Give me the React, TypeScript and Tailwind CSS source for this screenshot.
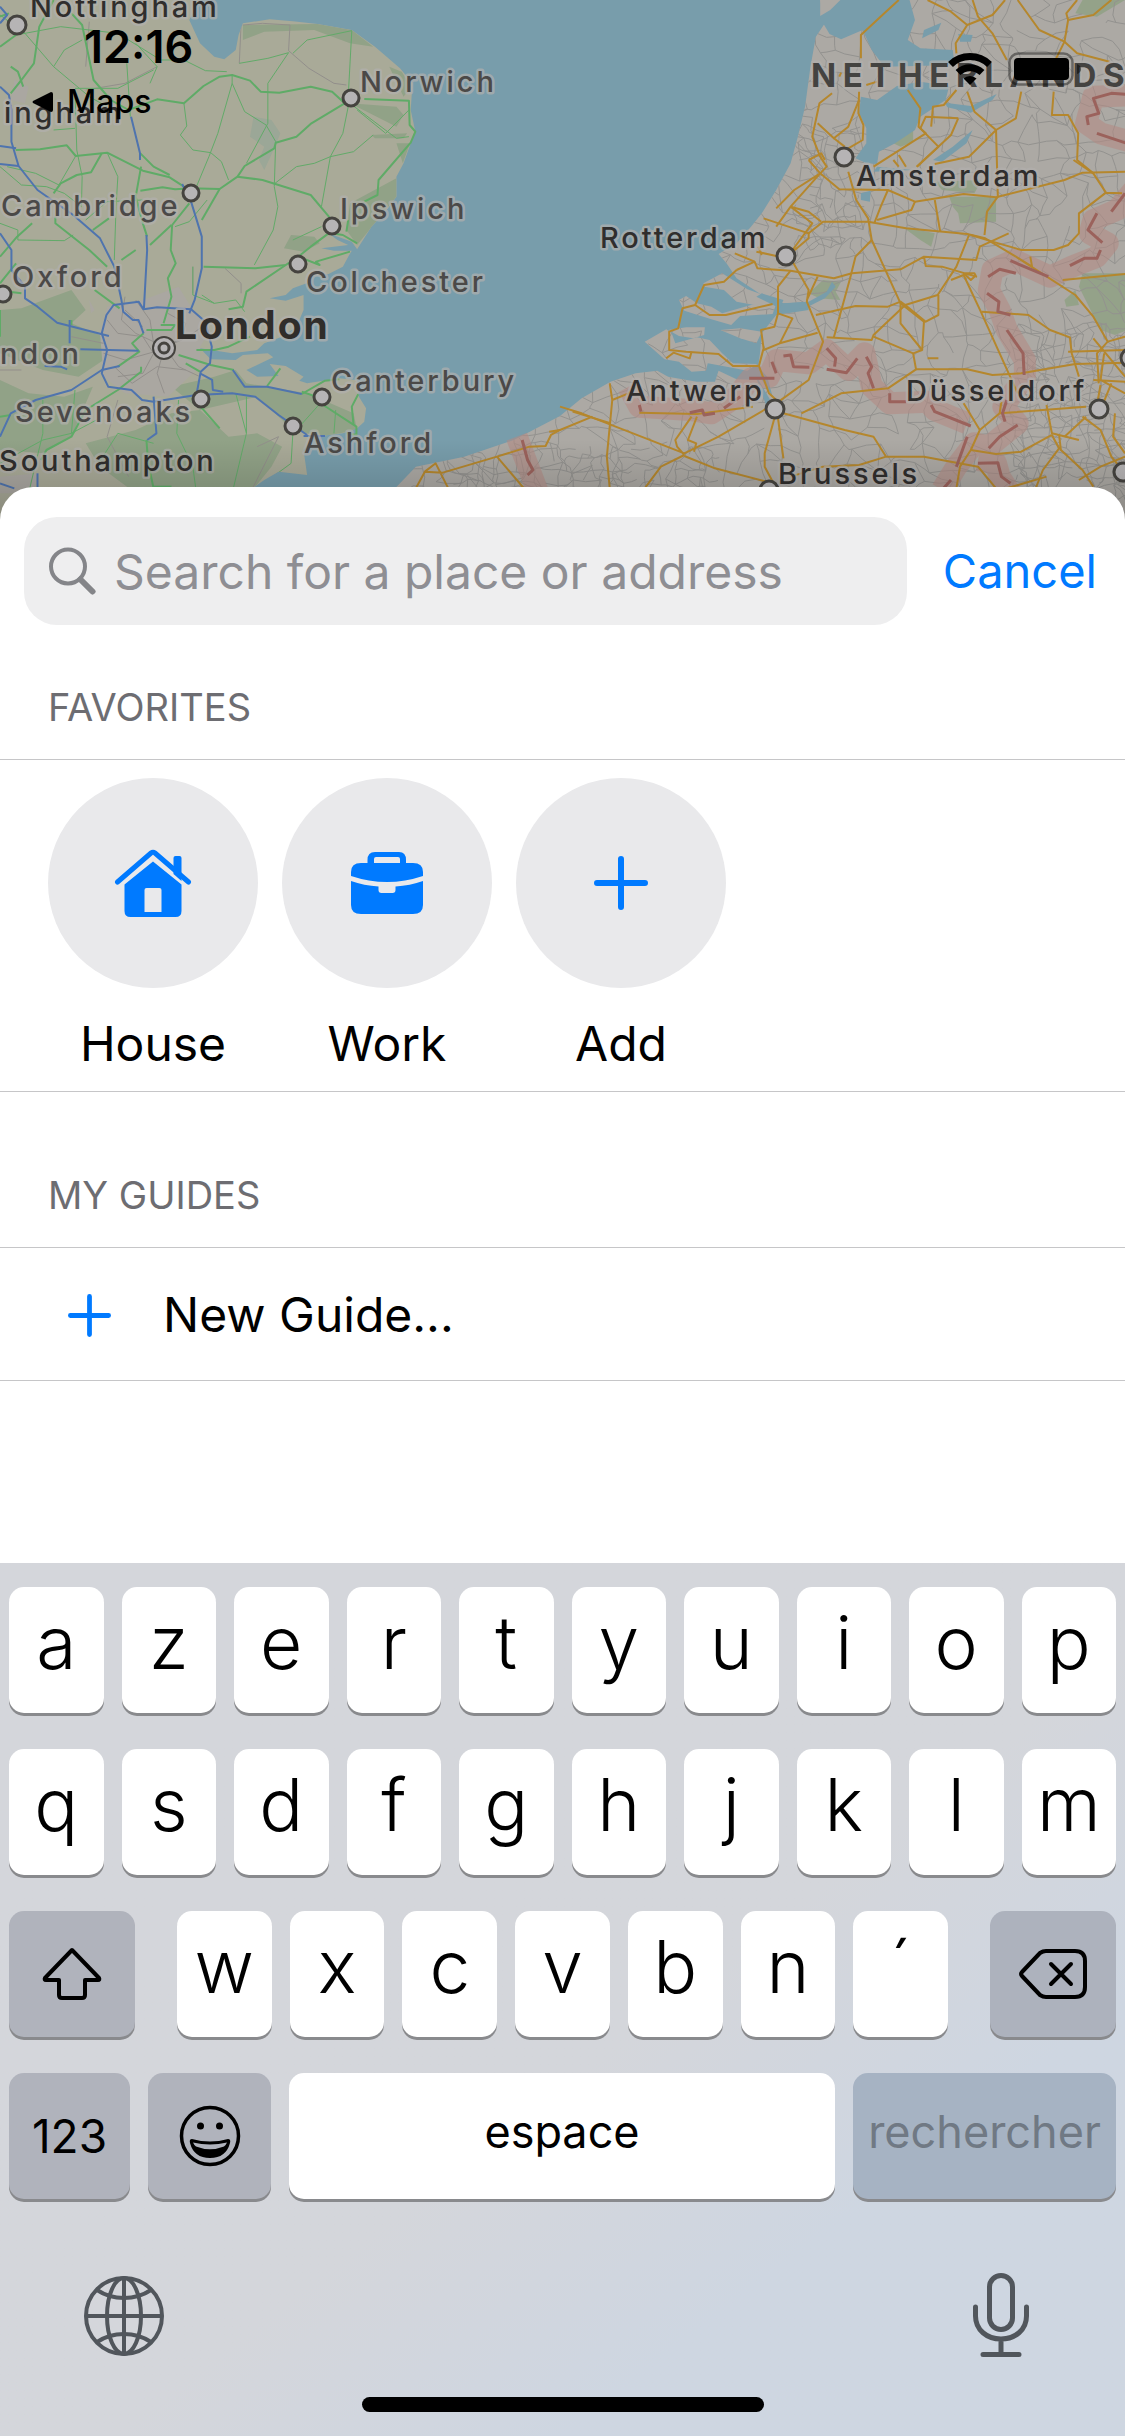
import type { ReactNode } from "react";

type Label = { t: string; x: number; y: number; kind: "town" | "city" | "capital" | "country" };
type Dot = { x: number; y: number; r: number };

const labels: Label[] = [
  { t: "Nottingham", x: 30, y: 17, kind: "city" },
  { t: "ingham", x: 4, y: 123, kind: "city" },
  { t: "Norwich", x: 360, y: 92, kind: "town" },
  { t: "Cambridge", x: 1, y: 216, kind: "town" },
  { t: "Ipswich", x: 340, y: 219, kind: "town" },
  { t: "Colchester", x: 306, y: 292, kind: "town" },
  { t: "Oxford", x: 12, y: 287, kind: "town" },
  { t: "London", x: 175, y: 339, kind: "capital" },
  { t: "ndon", x: 0, y: 364, kind: "town" },
  { t: "Canterbury", x: 331, y: 391, kind: "town" },
  { t: "Sevenoaks", x: 15, y: 422, kind: "town" },
  { t: "Ashford", x: 304, y: 453, kind: "town" },
  { t: "Southampton", x: -1, y: 471, kind: "city" },
  { t: "NETHERLANDS", x: 811, y: 87, kind: "country" },
  { t: "Amsterdam", x: 856, y: 186, kind: "city" },
  { t: "Rotterdam", x: 600, y: 248, kind: "city" },
  { t: "Antwerp", x: 626, y: 401, kind: "city" },
  { t: "Düsseldorf", x: 906, y: 401, kind: "city" },
  { t: "Brussels", x: 778, y: 484, kind: "city" },
];

const labelStyle = {
  town: "text-[29px] font-medium tracking-widest fill-[#4b4948]",
  city: "text-[29px] font-medium tracking-widest fill-[#302e2d]",
  capital: "text-[39px] font-bold tracking-wider fill-[#302d2a]",
  country: "text-[33px] font-bold tracking-[0.2em] fill-[#444341]",
};

const dots: Dot[] = [
  { x: 17, y: 25, r: 9 }, { x: 351, y: 98, r: 8 }, { x: 191, y: 193, r: 8 },
  { x: 332, y: 226, r: 8 }, { x: 298, y: 264, r: 8 }, { x: 3, y: 294, r: 8 },
  { x: 201, y: 399, r: 8 }, { x: 322, y: 397, r: 8 }, { x: 293, y: 426, r: 8 },
  { x: 844, y: 157, r: 9 }, { x: 786, y: 256, r: 9 }, { x: 775, y: 409, r: 9 },
  { x: 1099, y: 409, r: 9 }, { x: 769, y: 490, r: 9 }, { x: 1130, y: 358, r: 9 },
  { x: 1123, y: 472, r: 9 },
];

/* Irregular web of minor roads, jittered from a regular grid. */
function hash(a: number, b: number, k: number) {
  const v = Math.sin(a * 127 + b * 311 + k * 74) * 43758;
  return v - Math.floor(v);
}

function roadWeb(x0: number, y0: number, x1: number, y1: number, step: number, keep: number) {
  const p = (i: number, j: number) => [
    x0 + i * step + (hash(i, j, 1) - 0.5) * step * 0.9,
    y0 + j * step + (hash(i, j, 2) - 0.5) * step * 0.9,
  ];
  const link = (a: number[], b: number[], i: number, j: number, k: number) => {
    const mx = (a[0] + b[0]) / 2 + (hash(i, j, k) - 0.5) * step * 0.35;
    const my = (a[1] + b[1]) / 2 + (hash(i, j, k + 1) - 0.5) * step * 0.35;
    return `M${a[0].toFixed(1)} ${a[1].toFixed(1)}L${mx.toFixed(1)} ${my.toFixed(1)}L${b[0].toFixed(1)} ${b[1].toFixed(1)}`;
  };
  let d = "";
  for (let i = 0; x0 + i * step < x1; i++) {
    for (let j = 0; y0 + j * step < y1; j++) {
      const a = p(i, j);
      if (hash(i, j, 3) < keep) d += link(a, p(i + 1, j), i, j, 5);
      if (hash(i, j, 4) < keep) d += link(a, p(i, j + 1), i, j, 8);
      if (hash(i, j, 9) < keep * 0.25) d += link(a, p(i + 1, j + 1), i, j, 11);
    }
  }
  return d;
}

/* British land masses and roads, on a 1568 x 1500 survey grid. */
const ukLand =
  "M0 0H560L530 60 560 130 600 170 628 178 660 150 668 105 680 70 755 58 820 64 890 72 985 90 1050 140 1120 205 1155 250 1150 330 1163 395 1150 430 1130 490 1110 530 1110 590 1075 640 1040 680 1000 748 985 725 950 712 920 700 945 720 975 735 900 745 935 752 985 752 975 770 960 800 920 822 860 830 870 845 820 865 800 885 755 895 800 902 850 885 850 930 830 980 790 1010 740 1030 720 1050 650 1060 560 1045 590 1078 660 1080 680 1065 750 1060 765 1072 730 1090 690 1110 720 1130 780 1128 755 1092 800 1098 850 1130 838 1142 860 1150 950 1135 1000 1140 1005 1190 1025 1225 1020 1265 1000 1285 960 1300 880 1310 850 1350 860 1425 780 1415 740 1440 700 1470 0 1600Z";

const ukGreen = [
  "M0 930L60 925 200 870 240 930 200 970 290 1010 290 1080 220 1130 120 1110 0 1060Z",
  "M240 1330L380 1290 480 1240 560 1230 640 1310 720 1300 790 1340 760 1400 700 1480 380 1480 280 1400Z",
  "M480 1160L600 1130 660 1110 690 1150 860 1180 990 1240 1000 1290 900 1310 820 1290 720 1190 560 1230Z",
  "M680 75L890 72 985 90 1045 140 980 130 880 90 740 95 680 120Z",
  "M1090 200L1125 215 1150 260 1130 290Z",
  "M980 310L1110 320 1130 345 1110 380Z",
  "M1040 405L1140 400 1130 415 1050 415Z",
  "M1110 430L1148 430 1128 490Z",
  "M1110 535L1110 590 1000 735 970 690 980 610Z",
  "M815 705L880 710 895 730 850 755 795 745Z",
  "M0 1140L80 1180 180 1190 260 1160 200 1310 120 1360 0 1350Z",
];

const ukUrban =
  "M300 920L400 900 500 860 540 930 590 990 560 1040 560 1100 470 1190 350 1180 290 1130 280 1000Z M40 240L80 260 70 310 30 300Z M0 1430L110 1420 90 1480 0 1480Z M250 900L265 930 255 940Z";

const ukMotorways = [
  "M0 20L20 45 0 70", "M0 260L25 285 32 330 32 425 52 498 105 570 205 645 280 715 320 800 340 900 345 935 372 960 388 960 402 1000",
  "M0 438L45 445", "M0 492L52 498", "M367 350L392 460 392 480",
  "M510 552L535 605 565 710 565 805 545 900 530 940", "M410 705L412 750 403 925",
  "M318 915L388 905 402 928 440 922 535 928 575 965 593 1040 588 1090 562 1115 550 1185 430 1205 398 1200 368 1170 303 1160 285 1120 300 1050 285 1000 298 945Z",
  "M0 700L32 750 32 810 70 860 70 895 105 920 160 968 305 1008", "M225 1048L388 1052", "M125 1098L170 1100 188 1108",
  "M0 1310L30 1240 100 1200 200 1170 285 1110 335 1098", "M430 1190L438 1300 412 1320",
  "M550 1185L650 1180 715 1190 780 1245 860 1305", "M560 1120L594 1140 596 1170 625 1175", "M652 1110L685 1160 748 1160 845 1182",
  "M850 1308L910 1308", "M0 1450L40 1465", "M105 1420L105 1465", "M195 960L195 1030",
];

const ukMajor = [
  "M150 0L110 80 95 190 60 240 30 280", "M200 40L230 75 262 240 310 300 360 330 440 298 515 310 570 258 615 230 650 225 700 242 730 275 782 278 870 260 930 275 965 310 872 370 830 410 772 428 768 445 685 498 665 530 615 567 530 565",
  "M1020 297L1145 302 1147 375 1163 395 1150 428 1060 540 1057 585 1020 605", "M665 530L735 540 870 585 925 655",
  "M44 450L112 448 187 436 212 468 300 458 400 512 475 532 515 560", "M150 580L170 550 215 525 255 517 285 460",
  "M393 460L430 500 475 525", "M395 500L380 590 400 670 412 710", "M393 572L455 562 490 568 540 565", "M615 567L565 660",
  "M920 700L870 740 835 770 800 795 715 805 570 800", "M800 795L690 875 680 920 640 928", "M530 610L482 675 478 750 492 790 470 835 480 890 458 970",
  "M930 700L960 705 1000 730", "M835 770L895 795 885 785 980 755", "M480 675L420 735", "M155 650L155 670 250 750 300 800",
  "M340 780L380 750", "M0 850L45 790", "M0 770L48 710 90 670", "M265 870L335 925", "M25 875L60 880",
  "M0 140L45 105", "M0 50L25 40", "M30 200L50 215 65 260", "M402 1000L370 1030 390 1055 330 1100", "M450 975L490 975 480 990 410 990",
  "M500 1065L590 1095 655 1110", "M520 1090L560 1115", "M550 1050L600 1050 640 1040 700 1010", "M395 1100L395 1115 330 1170 240 1230 200 1310 130 1350 115 1380",
  "M562 1220L615 1285", "M845 1182L910 1142 950 1138", "M748 1158L785 1105", "M905 1215L998 1280 998 1305 970 1300", "M1003 1183L985 1220 990 1275",
  "M410 1320L415 1390 430 1465", "M0 1250L30 1245", "M845 1175L880 1188", "M200 960L200 975", "M0 930L0 1010", "M975 660L970 695",
  "M430 1460H480", "M260 690L305 655",
];

const ukMinor = [
  "M0 45L70 100 150 200 250 290 300 320", "M45 105L170 80 330 100 420 160 450 180 515 180 575 212 635 215", "M355 190L365 350", "M380 130L440 200 420 250",
  "M150 200L180 150 230 120", "M650 225L650 250 685 335 745 375 772 425 768 560 778 620 765 690 712 795", "M670 190L750 175 808 158 750 250 750 370 690 490",
  "M820 160L860 120 985 92 975 290", "M975 320L960 400 925 470 900 620", "M1000 330L1080 400 1145 330", "M980 310L1110 415 1145 410",
  "M1045 405L990 455 925 470 880 490 830 500 770 550", "M515 310L523 378 505 405 540 450 590 458 620 485 640 540", "M650 250L610 400 585 470 550 560",
  "M210 270L215 450 230 530 228 620", "M212 468L165 555 100 520 20 500", "M300 458L330 530 325 620 320 780", "M0 500L60 555 130 560 180 580 228 620",
  "M0 670L50 690 50 720 180 722 205 705", "M400 600L300 605 240 660", "M565 885L600 910 660 900 685 935", "M540 800L540 885 600 910",
  "M490 680L530 665 580 600", "M150 390L210 385", "M210 265L330 265 430 210", "M80 1480L120 1300 120 1200", "M500 1200L495 1300 540 1400 550 1480",
  "M690 1190L690 1300 650 1480", "M820 1300L815 1390 700 1480", "M905 1200L830 1290", "M940 1230L935 1300", "M660 1180L690 1300", "M210 1170L200 1300",
  "M0 1390L120 1320 200 1300 270 1260", "M430 1330L330 1300 270 1400", "M820 720L900 680",
];

const ukGrey =
  "M680 75L735 70 812 75 808 152 865 205 935 250 970 255M675 75L670 190M540 800V880M630 805L675 850 675 880M350 890L340 960 380 1000 460 1040M300 960L330 1000 400 1010 430 1060 400 1120 330 1130M460 1040L500 1100 560 1130M460 1045L440 1120 460 1180M460 1040L540 1000 580 970M380 900L420 960 430 1030M350 930L400 980M290 1060L350 1080 450 1050M470 940L520 970 510 1020 460 1040M200 1010L290 1030M320 1100L370 1150 440 1100 520 1110M720 1340L780 1310 700 1480M240 270L350 250 440 200M250 65L240 200M0 1110L60 1110M330 1200L300 1310 360 1430";

/* Continental land masses and roads, same grid, shifted east. */
const euMain =
  "M-480 1490L-400 1400 -266 1370 -128 1320 0 1248 60 1195 140 1145 210 1120 270 1112 300 1130 380 1145 430 1145 440 1112 490 1138 560 1140 590 1190 575 1130 550 1100 555 1060 560 1000 600 945 690 930 690 905 620 910 560 885 490 835 462 790 440 762 490 730 530 680 560 640 600 570 640 490 660 410 680 320 695 200 710 110 735 70 722 0H1600V1600H-480Z";

const euIslands = [
  "M235 1025L295 988 310 1000 320 1030 380 1012 415 1020 450 1060 480 1090 548 1092 520 1112 470 1102 410 1090 405 1112 365 1115 330 1085 290 1078Z",
  "M300 990L350 982 402 982 400 1005 370 1015 330 1008Z",
  "M330 900L350 888 380 910 420 920 450 940 540 912 600 912 590 942 500 948 475 975 420 958 345 932Z",
  "M398 850L450 820 520 868 602 900 600 915 540 915 490 905 455 870 400 860Z",
  "M445 990L500 985 560 995 545 1030 500 1015Z",
];

const euWater = [
  "M722 55L745 0H970L985 60 965 120 1000 145 1090 150 1095 195 900 200 865 150 840 90 780 118 748 102Z",
  "M835 290L880 300 935 258 1000 245 1080 258 1070 300 1000 350 985 390 930 430 885 455 880 492 850 490 820 475 850 430 850 385 830 340Z",
  "M1010 90L1058 68 1050 90 1005 115Z", "M1105 102L1145 105 1140 125 1110 125Z", "M1145 390L1128 430 1060 485 1035 480 1090 440Z",
  "M1068 308L1140 318 1212 282 1200 300 1140 338 1075 322Z", "M835 580L862 572 860 605 835 600Z", "M880 500L980 510 870 515Z",
  "M600 912L690 905 740 875 755 845 765 860 735 895 680 925 600 935Z", "M560 880L620 900 610 925 545 890Z", "M540 1120L600 1230 580 1240 560 1180Z",
];

const euGreen = [
  "M1450 0L1568 0 1490 50 1430 40Z", "M925 430L980 390 980 425 945 440Z", "M1080 590L1210 590 1210 665 1110 670 1105 640 1090 620Z",
  "M950 680L1040 700 1030 740 1000 720Z", "M690 880L730 840 780 845 765 875 778 900 720 895Z", "M1450 820H1600V980L1540 1005 1500 990 1440 860Z",
  "M1400 900L1430 870 1440 915 1405 920Z", "M1040 545L1170 540 1150 580 1060 570Z",
];

const euBorder = [
  "M1600 285L1480 290 1460 370 1500 400 1600 430", "M1600 560L1545 630 1480 660 1470 700 1520 730 1490 770 1420 800 1360 830 1260 780 1200 810 1190 870 1220 930 1240 990 1290 1080 1290 1130 1230 1220 1270 1270 1190 1340 1150 1330 1100 1400 1060 1470",
  "M1130 1270L1040 1230 1020 1205 915 1210 865 1160 845 1060 800 1110 740 1050 690 1090 600 1080 580 1130 530 1135 490 1190 420 1240 360 1230 220 1220 190 1160", "M-120 1310L-60 1480", "M1160 1380L1210 1390 1220 1430 1250 1480",
];

const euBorderLine = [
  "M1600 285L1530 280 1480 295 1495 340 1462 350 1466 375", "M1490 400L1600 440", "M1568 580L1530 635", "M1490 640L1465 690 1505 728", "M1500 750L1490 775 1455 775 1415 797",
  "M1265 820L1220 808 1188 830", "M1250 782L1355 830", "M1185 880L1218 905 1215 935 1250 945", "M1240 990L1285 1060 1288 1125",
  "M1240 1200L1228 1240 1235 1265M1190 1345L1220 1310 1270 1275", "M1140 1278L1040 1235 1030 1215M960 1205H915V1180", "M870 1165L855 1120 865 1100 850 1070M825 1075L795 1118 740 1108M620 1068L640 1065 648 1100 692 1102M588 1085L600 1120M595 1135L525 1135M740 1045L765 1075 762 1100",
  "M500 1190L455 1225M430 1240L400 1245 395 1230 360 1238M220 1215L225 1235", "M-105 1320L-90 1380 -75 1410 -90 1425", "M1130 1310L1100 1400", "M1085 1440L1060 1470", "M1160 1390L1215 1388 1225 1430 1250 1450",
];

const euRoads = [
  "M940 0L900 40 835 105V175M830 275L828 340 842 375 840 420 800 445", "M755 280L720 310 700 410 722 470 740 500 722 520",
  "M715 370L760 415 800 380 830 300", "M760 415L790 440", "M722 520L640 620 600 680M722 520L650 570 600 625M690 480L725 460 735 480M690 480L722 520 775 568 910 570 985 605 1120 582 1210 592 1400 540 1450 518 1568 515",
  "M800 515L822 600 855 655 865 720 945 910 1010 965 1005 1050 980 1060 988 1108 910 1165 780 1180 670 1240",
  "M910 570L890 620 872 670M565 655L690 700 730 665 855 665 960 685 1130 702 1180 715 1265 770", "M690 700V715L635 765 700 670 640 620",
  "M640 620L690 635 725 665", "M985 605L975 630 880 660", "M1040 600L1055 695", "M1210 390L1215 590 1185 635 1178 705",
  "M1130 275L1150 335 1210 390 1265 355 1280 275M1210 390L1135 470 1040 492", "M1105 355L1015 350 1000 385 1050 440 990 500", "M965 270L1000 325 995 380 1015 400 870 500M925 480L940 500M940 465L960 500M1105 355L1085 405 990 500",
  "M1100 270L1065 315 1035 320 1030 380", "M1020 0L1085 35 1130 75 1098 130 1100 160", "M1145 0L1160 50 1200 100 1240 180", "M1130 75L1200 45 1235 0",
  "M1270 0L1330 90 1400 125 1435 160 1525 185", "M1530 0L1480 45 1410 60 1405 40 1435 0M1410 60L1400 125 1370 190", "M1370 275L1365 345 1410 345 1438 400 1435 480 1480 520 1515 578 1560 580M1515 578L1440 640V700L1410 735 1370 750H1280L1200 725 1140 705",
  "M1425 480L1480 520", "M545 755L600 768M485 760L540 785 548 805 640 812 760 835 810 820 945 808 1010 770 1155 780 1165 740 1245 700M1010 770L1015 798 1060 800 1155 830 1150 820 1120 820 1140 840 1150 830",
  "M550 740L560 765M490 810L540 785M490 810L455 845 400 855 375 915 340 925 328 985 303 995 303 1050 350 1055 440 1062 480 1098 550 1098",
  "M375 915L415 945 460 945 590 912M295 1075L315 1058 360 1075 365 1055", "M640 812L605 860V940L595 980 558 990 565 1045 552 1098 580 1180 600 1200",
  "M605 940L645 955 610 1030M635 765L690 870 685 905 730 1025 690 1140 600 1210M715 830L685 900", "M565 1050L610 1030 715 998", "M710 945L820 918 910 920 945 905 958 915 1048 885 1100 800 1135 705M958 915L870 1005 865 1020 740 1012",
  "M865 720L820 770 805 835 760 1012M958 915L1015 965 1050 945V885M945 910V970L1005 1050M870 1010L980 1060", "M1085 840L1120 825 1170 940 1270 1180",
  "M1170 935L1300 945 1360 990 1415 1012 1420 1060 1440 1130", "M1265 770L1310 800 1305 770M1265 770L1430 885 1480 950 1520 1025 1490 1060 1495 1150M1395 840L1568 822",
  "M988 1108L1130 1108 1200 1125 1280 1120 1430 1092 1568 1088", "M1410 1055L1568 1050M1480 1015L1568 1130M1480 1140L1568 1145M1520 1025L1568 1010M1510 1060L1500 1140 1568 1180",
  "M1020 1075H1050M1120 1210L1165 1290 1140 1350 1110 1400 1100 1465M1165 1290L1220 1240 1460 1220M1220 1240L1225 1205",
  "M1350 1215L1365 1300 1440 1320M1365 1305L1280 1355 1210 1362 1140 1350M1365 1305L1385 1345 1340 1410 1320 1465M1385 1305L1390 1350 1450 1410 1480 1460",
  "M1460 1250L1400 1310M1450 1250L1500 1290 1530 1370 1568 1420M1540 1240L1535 1310 1568 1360M1568 1370L1500 1400 1440 1440",
  "M620 1240L790 1290 870 1310 905 1370 1010 1370 1160 1400 1210 1465M905 1370L830 1395 730 1400 640 1430", "M595 1255L568 1360V1400L600 1465M605 1255L620 1375",
  "M590 1215L440 1310 345 1360 60 1240 0 1220M535 1220L380 1242 220 1238M365 1250L320 1320 325 1340 345 1365M380 1250L355 1320 378 1330 372 1355M345 1365L280 1400 235 1465",
  "M345 1368L430 1405 590 1450", "M138 1150L145 1200 130 1370 138 1465M145 1200L190 1180 210 1160M0 1290L90 1250M0 1290L-25 1305 -40 1338 -85 1340 -175 1370 -325 1418 -375 1415 -400 1465M-375 1415L-345 1390 -310 1465M-175 1370L-100 1465",
  "M0 1290L-30 1295M35 1235L140 1270M1240 1465L1350 1430", "M775 230L780 218M850 255L880 245", "M1500 1155L1490 1215M1530 1150L1500 1230",
];

const web = roadWeb(-480, 0, 1600, 1500, 52, 0.72);
const fineWeb = roadWeb(1260, 980, 1600, 1500, 30, 0.7) + roadWeb(-300, 1340, 420, 1500, 34, 0.6) + roadWeb(660, 380, 820, 760, 30, 0.6);

function Lines({ d, className }: { d: string[]; className: string }) {
  return (
    <g className={`fill-none ${className}`} strokeLinejoin="round">
      {d.map((p) => (
        <path key={p} d={p} vectorEffect="non-scaling-stroke" />
      ))}
    </g>
  );
}

function MapView() {
  return (
    <svg
      className="absolute inset-0 h-full w-full"
      viewBox="0 0 1125 520"
      preserveAspectRatio="xMidYMin slice"
      role="img"
      aria-label="Map of south-east England and the Low Countries"
    >
      <defs>
        <clipPath id="uk-clip">
          <path d={ukLand} />
        </clipPath>
        <clipPath id="eu-clip">
          <path d={euMain} />
          {euIslands.map((d) => (
            <path key={d} d={d} />
          ))}
        </clipPath>
        <linearGradient id="sheet-shade" x1="0" y1="0" x2="0" y2="1">
          <stop offset="0" stopColor="#000" stopOpacity="0" />
          <stop offset="1" stopColor="#000" stopOpacity="0.2" />
        </linearGradient>
      </defs>
      <rect width="1125" height="520" className="fill-[#789dab]" />

      <g transform="scale(0.35714 0.33333)">
        <path d={ukLand} className="fill-[#a9aa98]" />
        <g clipPath="url(#uk-clip)">
          {ukGreen.map((d) => (
            <path key={d} d={d} className="fill-[#91a287]" />
          ))}
          <path d="M710 350L760 360 785 400 770 440 740 510 725 480 740 440 700 410Z" className="fill-[#9ba797]" />
          <path d={ukUrban} className="fill-[#aaa7a1]" />
          <Lines d={[ukGrey]} className="stroke-[#928f8b] stroke-1" />
          <Lines d={ukMinor} className="stroke-[#62aa69] stroke-1" />
        </g>
        <Lines d={ukMajor} className="stroke-[#5fab67] stroke-2" />
        <Lines d={ukMotorways} className="stroke-[#4f74ae] stroke-2" />
      </g>

      <g transform="translate(560 0) scale(0.36036 0.33333)">
        {[euMain, ...euIslands].map((d) => (
          <path key={d} d={d} className="fill-[#aca9a4]" />
        ))}
        {euGreen.map((d) => (
          <path key={d} d={d} className="fill-[#94a289]" />
        ))}
        <g clipPath="url(#eu-clip)">
          <Lines d={[web, fineWeb]} className="stroke-[#93928f] stroke-1" />
        </g>
        {euWater.map((d) => (
          <path key={d} d={d} className="fill-[#789dab]" />
        ))}
        <path d="M722 0H778L750 30 722 48Z" className="fill-[#aca9a4]" />
        <g opacity="0.55">
          <Lines d={euBorder} className="stroke-[#b48a83] stroke-[22px]" />
        </g>
        <Lines d={euRoads} className="stroke-[#b5872d] stroke-2" />
        <Lines d={euBorderLine} className="stroke-[#9b625c] stroke-[3px]" />
      </g>

      {dots.map((d) => (
        <circle key={`${d.x}-${d.y}`} cx={d.x} cy={d.y} r={d.r} className="fill-[#b6b4b5] stroke-[#45433f] stroke-3" />
      ))}
      <g className="fill-[#b6b4b5] stroke-[#45433f] stroke-2">
        <circle cx="164" cy="348" r="11" />
        <circle cx="164" cy="348" r="5" className="stroke-3" />
      </g>

      {labels.map((l) => (
        <text
          key={l.t}
          x={l.x}
          y={l.y}
          paintOrder="stroke"
          strokeLinejoin="round"
          className={`stroke-[#b2b0ae]/70 stroke-[5px] ${labelStyle[l.kind]}`}
        >
          {l.t}
        </text>
      ))}
      <rect y="440" width="1125" height="80" fill="url(#sheet-shade)" />
    </svg>
  );
}

function StatusBar() {
  return (
    <div className="relative flex items-start justify-between pt-5 pr-[42px] pl-8">
      <div>
        <div className="pl-[52px] text-[45px] leading-[54px] font-semibold">12:16</div>
        <a href="#maps" className="mt-2 flex items-center gap-3.5 text-[32px] leading-10 font-medium">
          <svg width="21" height="20" viewBox="0 0 21 20" aria-hidden="true">
            <path d="M1 9Q0 10 1 11L19 20Q21 20 21 18V2Q21 0 19 0Z" />
          </svg>
          Maps
        </a>
      </div>
      <div className="flex items-center gap-4 pt-8">
        <svg width="44" height="33" viewBox="0 0 44 33" fill="none" stroke="#000" strokeWidth="7" role="img" aria-label="Wi-Fi">
          <path d="M2.500 11.500A28 28 0 0 1 41.500 11.500" />
          <path d="M10 19.500A17.500 17.500 0 0 1 34 19.500" />
          <path d="M22 32L15.500 25.500A9.500 9.500 0 0 1 28.500 25.500Z" fill="#000" stroke="none" />
        </svg>
        <svg width="75" height="34" viewBox="0 0 75 34" role="img" aria-label="Battery">
          <rect x="1.500" y="1.500" width="63" height="31" rx="9" fill="none" stroke="#000" strokeOpacity="0.4" strokeWidth="2.500" />
          <rect x="6" y="6" width="55" height="22" rx="4" />
          <path d="M69 12Q73 13.500 73 17T69 22Z" fillOpacity="0.5" />
        </svg>
      </div>
    </div>
  );
}

function Plus({ size, width }: { size: number; width: number }) {
  return (
    <svg width={size} height={size} viewBox="0 0 54 54" className="fill-none stroke-[#007aff]" strokeWidth={width} strokeLinecap="round" aria-hidden="true">
      <path d="M27 3V51M3 27H51" />
    </svg>
  );
}

function House() {
  return (
    <svg width="78" height="68" viewBox="0 0 77 68" className="fill-[#007aff]" aria-hidden="true">
      <path d="M59 25V9Q59 7 61 7H65Q67 7 67 9V32Z" />
      <path d="M3 33L36.500 4Q38.500 2.500 40.500 4L74 33" fill="none" className="stroke-[#007aff]" strokeWidth="5" strokeLinecap="round" />
      <path fillRule="evenodd" d="M38.500 12.500L67 35.500V62Q67 68 61 68H16Q10 68 10 62V35.500ZM32 39Q30 39 30 41V63H47V41Q47 39 45 39Z" />
    </svg>
  );
}

function Briefcase() {
  return (
    <svg width="72" height="62" viewBox="0 0 72 62" className="fill-[#007aff]" aria-hidden="true">
      <path fillRule="evenodd" d="M16.500 12V8Q16.500 0 24 0H48Q55 0 55 8V12H49V7Q49 5 47 5H25Q23 5 23 7V12Z" />
      <path d="M10 11H62Q72 11 72 20V24Q36 36 0 24V20Q0 11 10 11Z" />
      <path d="M0 29Q13 33.500 27.500 34.500V38Q27.500 41 30.500 41H41.500Q44.500 41 44.500 38V34.500Q59 33.500 72 29V53Q72 62 62 62H10Q0 62 0 53Z" />
    </svg>
  );
}

function Favorite({ label, children }: { label: string; children: ReactNode }) {
  return (
    <button type="button" className="flex w-[210px] flex-col items-center">
      <span className="flex h-[210px] w-[210px] items-center justify-center rounded-full bg-[#e9e9eb]">{children}</span>
      <span className="mt-6 text-[48px] leading-[64px]">{label}</span>
    </button>
  );
}

const keyBase = "flex h-[126px] min-w-0 items-center justify-center rounded-[15px] shadow-[0_3px_0_#898a8d]";

function Letter({ children }: { children: string }) {
  return (
    <button type="button" className={`${keyBase} flex-1 bg-white pb-4 text-[73px] leading-none font-[350]`}>
      {children}
    </button>
  );
}

function ModKey({ label, className, children }: { label: string; className: string; children: ReactNode }) {
  return (
    <button type="button" aria-label={label} className={`${keyBase} shrink-0 text-[46px] ${className}`}>
      {children}
    </button>
  );
}

function Keyboard() {
  return (
    <section
      aria-label="Keyboard"
      className="flex flex-col gap-9 bg-linear-to-br from-[#d4d6db] from-55% to-[#ced6e1] to-75% px-[9px] pt-6 pb-6"
    >
      {["azertyuiop", "qsdfghjklm"].map((row) => (
        <div key={row} className="flex gap-[18px]">
          {row.split("").map((c) => (
            <Letter key={c}>{c}</Letter>
          ))}
        </div>
      ))}
      <div className="flex gap-[42px]">
        <ModKey label="Shift" className="w-[126px] bg-[#b0b3bc]">
          <svg width="60" height="54" viewBox="0 0 60 54" fill="none" stroke="#000" strokeWidth="4" strokeLinejoin="round" aria-hidden="true">
            <path d="M30 3L57 31Q58 33 56 33H43V48Q43 51 40 51H20Q17 51 17 48V33H4Q2 33 3 31Z" />
          </svg>
        </ModKey>
        <div className="flex min-w-0 flex-1 gap-[18px]">
          {"wxcvbn´".split("").map((c) => (
            <Letter key={c}>{c}</Letter>
          ))}
        </div>
        <ModKey label="Delete" className="w-[126px] bg-[#adb2bd]">
          <svg width="70" height="52" viewBox="0 0 70 52" fill="none" stroke="#000" strokeWidth="4" strokeLinejoin="round" strokeLinecap="round" aria-hidden="true">
            <path d="M22 5Q25 3 28 3H57Q67 3 67 13V39Q67 49 57 49H28Q25 49 22 47L4 28Q2 26 4 24Z" />
            <path d="M33 16L53 36M53 16L33 36" />
          </svg>
        </ModKey>
      </div>
      <div className="flex gap-[18px]">
        <ModKey label="Numbers" className="w-[121px] bg-[#b0b3bc]">
          123
        </ModKey>
        <ModKey label="Emoji" className="w-[123px] bg-[#b0b3bc]">
          <svg width="62" height="62" viewBox="0 0 62 62" aria-hidden="true">
            <circle cx="31" cy="31" r="28.500" fill="none" stroke="#000" strokeWidth="3.500" />
            <circle cx="21.500" cy="21" r="3.500" />
            <circle cx="40.500" cy="21" r="3.500" />
            <path fillRule="evenodd" d="M13 34Q31 39 49 34Q52 34 51 38Q47 53 31 53Q15 53 11 38Q10 34 13 34ZM14 37.500Q15 40 17 41.500Q31 47 45 41.500Q47 40 48 37.500Q31 41.500 14 37.500Z" />
          </svg>
        </ModKey>
        <button type="button" className={`${keyBase} flex-1 bg-white pb-2 text-[45px]`}>
          espace
        </button>
        <button type="button" disabled className={`${keyBase} w-[263px] shrink-0 bg-[#a6b3c3] pb-2 text-[45px] text-[#707984]`}>
          rechercher
        </button>
      </div>
      <div className="mt-[38px] flex items-center justify-between px-[75px]">
        <button type="button" aria-label="Next keyboard">
          <svg width="80" height="84" viewBox="0 0 80 84" className="fill-none stroke-[#51565c]" strokeWidth="4" aria-hidden="true">
            <circle cx="40" cy="43" r="38" />
            <path d="M40 5V81M2 43H78" />
            <ellipse cx="40" cy="43" rx="17" ry="38" />
            <path d="M13 17Q25 25 40 25T67 17M13 69Q25 61 40 61T67 69" />
          </svg>
        </button>
        <button type="button" aria-label="Dictation" className="pr-3">
          <svg width="56" height="84" viewBox="0 0 56 84" className="fill-none stroke-[#51565c]" strokeWidth="5" strokeLinecap="round" aria-hidden="true">
            <rect x="16.500" y="2.500" width="23" height="54" rx="11.500" />
            <path d="M2.500 34V43C2.500 57 14 66 28 66S53.500 57 53.500 43V34M28 66V81M10 81.500H46" />
          </svg>
        </button>
      </div>
      <div className="mx-auto mt-1 h-[15px] w-[402px] max-w-full rounded-full bg-black" />
    </section>
  );
}

export default function App() {
  return (
    <div className="flex min-h-screen flex-col bg-white font-['Inter','Liberation_Sans',sans-serif] text-black">
      <header className="relative h-[520px] overflow-hidden">
        <MapView />
        <StatusBar />
      </header>

      <main className="relative -mt-[33px] flex-1 rounded-t-[33px] bg-white pb-10">
        <form className="flex items-center gap-9 pt-[30px] pr-7 pl-6">
          <label className="flex h-[108px] min-w-0 flex-1 items-center gap-[18px] rounded-[33px] bg-[#eeeeef] px-6">
            <svg width="48" height="48" viewBox="0 0 48 48" className="shrink-0 fill-none stroke-[#848589]" strokeLinecap="round" aria-hidden="true">
              <circle cx="20" cy="19.500" r="17" strokeWidth="4" />
              <path d="M32.500 32.500L44.500 44.500" strokeWidth="6" />
            </svg>
            <input
              type="search"
              aria-label="Search"
              placeholder="Search for a place or address"
              className="min-w-0 flex-1 bg-transparent pt-0.5 text-[48px] outline-none placeholder:text-[#8e8e93]"
            />
          </label>
          <button type="button" className="text-[47px] leading-[60px] text-[#007aff]">
            Cancel
          </button>
        </form>

        <section>
          <h2 className="flex h-[134px] items-end pb-7 pl-12 text-[38px] leading-[48px] text-[#6d6d72]">FAVORITES</h2>
          <div className="flex gap-6 border-y border-[#c6c6c8] px-12 pt-[18px] pb-[15px]">
            <Favorite label="House">
              <House />
            </Favorite>
            <Favorite label="Work">
              <Briefcase />
            </Favorite>
            <Favorite label="Add">
              <Plus size={54} width={6} />
            </Favorite>
          </div>
        </section>

        <section>
          <h2 className="flex h-[155px] items-end pb-7 pl-12 text-[38px] leading-[48px] text-[#6d6d72]">MY GUIDES</h2>
          <button type="button" className="flex h-[134px] w-full items-center gap-[52px] border-y border-[#c6c6c8] pt-0.5 pl-[68px] text-[48px]">
            <Plus size={43} width={6} />
            New Guide...
          </button>
        </section>
      </main>

      <Keyboard />
    </div>
  );
}
